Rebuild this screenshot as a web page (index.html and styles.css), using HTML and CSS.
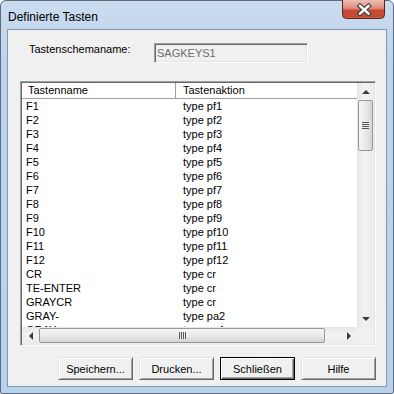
FILE: index.html
```html
<!DOCTYPE html>
<html>
<head>
<meta charset="utf-8">
<link rel="stylesheet" href="styles.css">
</head>
<body>
<div class="window">
  <div class="titlebar">
    <span class="title">Definierte Tasten</span>
    <div class="close">
      <svg width="43" height="19" viewBox="0 0 43 19">
        <defs>
          <linearGradient id="cg" x1="0" y1="0" x2="0" y2="1">
            <stop offset="0" stop-color="#eec0b5"/>
            <stop offset="0.45" stop-color="#dc8b79"/>
            <stop offset="0.55" stop-color="#c94a33"/>
            <stop offset="0.9" stop-color="#c44a32"/>
            <stop offset="1" stop-color="#d87a60"/>
          </linearGradient>
        </defs>
        <path d="M0.5 0 V14.5 Q0.5 18.5 4.5 18.5 H38.5 Q42.5 18.5 42.5 14.5 V0" fill="url(#cg)" stroke="#5c2219"/>
        <path d="M18 6 L26.5 13.5 M26.5 6 L18 13.5" stroke="#3c3c3c" stroke-width="4.6" stroke-linecap="square"/>
        <path d="M18 6 L26.5 13.5 M26.5 6 L18 13.5" stroke="#ffffff" stroke-width="2.4" stroke-linecap="square"/>
      </svg>
    </div>
  </div>
  <div class="client">
    <div class="formrow">
      <span class="label">Tastenschemaname:</span>
      <div class="field">SAGKEYS1</div>
    </div>
    <div class="listbox">
      <div class="view">
        <div class="header">
          <div class="hcell c1">Tastenname</div>
          <div class="hcell c2">Tastenaktion</div>
        </div>
        <div class="row"><span class="c1">F1</span><span class="c2">type pf1</span></div>
        <div class="row"><span class="c1">F2</span><span class="c2">type pf2</span></div>
        <div class="row"><span class="c1">F3</span><span class="c2">type pf3</span></div>
        <div class="row"><span class="c1">F4</span><span class="c2">type pf4</span></div>
        <div class="row"><span class="c1">F5</span><span class="c2">type pf5</span></div>
        <div class="row"><span class="c1">F6</span><span class="c2">type pf6</span></div>
        <div class="row"><span class="c1">F7</span><span class="c2">type pf7</span></div>
        <div class="row"><span class="c1">F8</span><span class="c2">type pf8</span></div>
        <div class="row"><span class="c1">F9</span><span class="c2">type pf9</span></div>
        <div class="row"><span class="c1">F10</span><span class="c2">type pf10</span></div>
        <div class="row"><span class="c1">F11</span><span class="c2">type pf11</span></div>
        <div class="row"><span class="c1">F12</span><span class="c2">type pf12</span></div>
        <div class="row"><span class="c1">CR</span><span class="c2">type cr</span></div>
        <div class="row"><span class="c1">TE-ENTER</span><span class="c2">type cr</span></div>
        <div class="row"><span class="c1">GRAYCR</span><span class="c2">type cr</span></div>
        <div class="row"><span class="c1">GRAY-</span><span class="c2">type pa2</span></div>
        <div class="row"><span class="c1">GRAY+</span><span class="c2">type pa1</span></div>
      </div>
      <div class="vscroll">
        <div class="arrow"><span class="tri-up"></span></div>
        <div class="vthumb"><span class="vgrip"></span></div>
        <div class="track"></div>
        <div class="arrow"><span class="tri-down"></span></div>
      </div>
      <div class="hscroll">
        <div class="arrow"><span class="tri-left"></span></div>
        <div class="hthumb"><span class="hgrip"></span></div>
        <div class="track"></div>
        <div class="arrow"><span class="tri-right"></span></div>
      </div>
      <div class="corner"></div>
    </div>
    <div class="buttons">
      <button class="btn">Speichern...</button>
      <button class="btn">Drucken...</button>
      <button class="btn default">Schließen</button>
      <button class="btn">Hilfe</button>
    </div>
  </div>
</div>
</body>
</html>
```
FILE: styles.css
```css
* { box-sizing: border-box; }
html, body { margin: 0; padding: 0; background: #ffffff; }
body {
  font-family: "Liberation Sans", Arial, sans-serif;
  font-size: 11px;
  color: #000;
}
.window {
  width: 394px;
  height: 394px;
  border: 1px solid #5a6c82;
  border-radius: 6px 6px 2px 2px;
  background: linear-gradient(#cbdcf0, #bfd4ec 60px, #b9d1ea);
  padding: 0 6px 6px;
  display: flex;
  flex-direction: column;
}
.titlebar {
  height: 28px;
  flex: none;
  display: flex;
  justify-content: space-between;
  align-items: flex-start;
  padding-left: 1px;
}
.title {
  font-size: 12px;
  line-height: 14px;
  margin-top: 9px;
}
.close {
  width: 43px;
  height: 19px;
  margin-top: -1px;
  margin-right: 2px;
}
.close svg { display: block; }
.client {
  flex: none;
  height: 358px;
  border: 1px solid #8397ad;
  background: #f0f0f0;
  display: flex;
  flex-direction: column;
  padding: 13px 0 0 12px;
}
.formrow {
  display: flex;
  margin-left: 9px;
  height: 20px;
}
.label {
  width: 125px;
  line-height: 13px;
}
.field {
  width: 154px;
  height: 20px;
  border: 1px solid;
  border-color: #a0a0a0 #ffffff #ffffff #a0a0a0;
  box-shadow: inset 1px 1px 0 #696969, inset -1px -1px 0 #e3e3e3;
  padding-left: 2px;
  color: #6d6d6d;
  display: flex;
  align-items: center;
}
.listbox {
  margin-top: 18px;
  width: 356px;
  height: 265px;
  display: grid;
  grid-template-columns: 335px 17px;
  grid-template-rows: 244px 17px;
  border: 1px solid;
  border-color: #a0a0a0 #ffffff #ffffff #a0a0a0;
  box-shadow: inset 1px 1px 0 #696969, inset -1px -1px 0 #e3e3e3;
  padding: 1px;
  background: #fff;
}
.view {
  overflow: hidden;
  background: #fff;
}
.header {
  display: flex;
  height: 16px;
  border-bottom: 1px solid #a0a0a0;
  line-height: 15px;
}
.hcell.c1 {
  width: 154px;
  padding-left: 6px;
  border-right: 1px solid #a0a0a0;
}
.hcell.c2 {
  padding-left: 7px;
  flex: 1;
}
.row {
  display: flex;
  height: 14px;
  line-height: 14px;
  white-space: nowrap;
}
.row .c1 { width: 154px; padding-left: 4px; }
.row .c2 { padding-left: 7px; }
.vscroll {
  display: flex;
  flex-direction: column;
  background: linear-gradient(to right, #e6e6e6, #f2f2f2 40%, #ececec);
}
.hscroll {
  display: flex;
  background: linear-gradient(#e6e6e6, #f2f2f2 40%, #ececec);
}
.corner { background: #f0f0f0; }
.arrow {
  flex: none;
  width: 17px;
  height: 17px;
  display: flex;
  align-items: center;
  justify-content: center;
}
.track { flex: 1; }
.tri-up, .tri-down, .tri-left, .tri-right { width: 0; height: 0; }
.tri-up {
  border-left: 4px solid transparent;
  border-right: 4px solid transparent;
  border-bottom: 4px solid #3a3a3a;
}
.tri-down {
  border-left: 4px solid transparent;
  border-right: 4px solid transparent;
  border-top: 4px solid #3a3a3a;
}
.tri-left {
  border-top: 4px solid transparent;
  border-bottom: 4px solid transparent;
  border-right: 4px solid #3a3a3a;
}
.tri-right {
  border-top: 4px solid transparent;
  border-bottom: 4px solid transparent;
  border-left: 4px solid #3a3a3a;
}
.vthumb {
  flex: none;
  height: 51px;
  margin: 0 1px;
  border: 1px solid #979797;
  border-radius: 2px;
  background: linear-gradient(to right, #f6f6f6, #e9e9e9 50%, #d5d5d5);
  display: flex;
  align-items: center;
  justify-content: center;
}
.vgrip {
  width: 7px;
  height: 7px;
  background: repeating-linear-gradient(#565656 0 1px, #eeeeee 1px 2px);
}
.hthumb {
  flex: none;
  width: 286px;
  margin: 1px 0;
  border: 1px solid #979797;
  border-radius: 2px;
  background: linear-gradient(#f6f6f6, #e9e9e9 50%, #d5d5d5);
  display: flex;
  align-items: center;
  justify-content: center;
}
.hgrip {
  width: 7px;
  height: 7px;
  background: repeating-linear-gradient(to right, #565656 0 1px, #eeeeee 1px 2px);
}
.buttons {
  display: flex;
  gap: 6px;
  margin-top: 11px;
  margin-left: 38px;
}
.btn {
  width: 75px;
  height: 23px;
  padding: 0;
  font-family: "Liberation Sans", Arial, sans-serif;
  font-size: 11px;
  color: #000;
  background: #f0f0f0;
  border: 1px solid;
  border-color: #e3e3e3 #696969 #696969 #e3e3e3;
  box-shadow: inset 1px 1px 0 #ffffff, inset -1px -1px 0 #a0a0a0;
}
.btn.default {
  border-color: #000;
  box-shadow: inset 1px 1px 0 #ffffff, inset -1px -1px 0 #696969, inset -2px -2px 0 #a0a0a0;
}
```
